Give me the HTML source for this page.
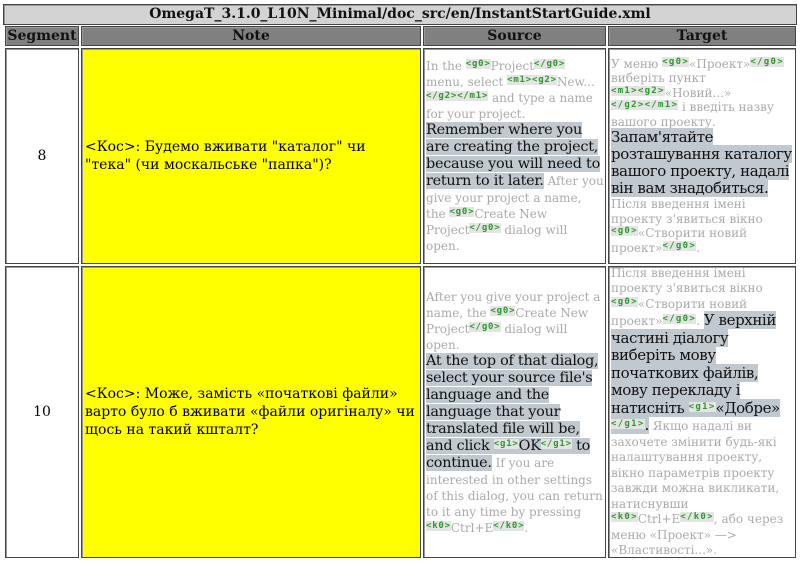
<!DOCTYPE html>
<html><head><meta charset="utf-8"><style>
body{margin:0;width:800px;height:562px;background:#fff;overflow:hidden;font-family:"DejaVu Serif","Liberation Serif",serif;}
.c{position:absolute;box-sizing:border-box;border:1px solid #444;box-shadow:inset 1px 1px 0 #999;}
.h{background:#808080;font-weight:bold;font-size:14px;text-align:center;line-height:18px;color:#111}
.v{display:flex;align-items:center}
.s{font-size:12px;line-height:15px;color:#aaa;padding:0 1px 0 2px}
.b{font-size:14.4px;line-height:17px;color:#111;background:#c0c8d0;letter-spacing:-0.25px}
.tg .b{font-size:15px;letter-spacing:-0.4px}
.t{font-family:"DejaVu Sans Mono","Liberation Mono",monospace;font-size:9px;color:#2a9a2a;background:#e4e4e4;vertical-align:4px;line-height:0;font-weight:bold;letter-spacing:0.8px}
.tg .t{letter-spacing:1.3px}
</style></head><body>
<div class="c" style="left:3px;top:4px;width:794px;height:21px;background:#d3d3d3;font-weight:bold;font-size:14px;text-align:center;line-height:19px;color:#111">OmegaT_3.1.0_L10N_Minimal/doc_src/en/InstantStartGuide.xml</div>
<div class="c h" style="left:5px;top:26px;width:74px;height:20px">Segment</div>
<div class="c h" style="left:81px;top:26px;width:340px;height:20px">Note</div>
<div class="c h" style="left:423px;top:26px;width:183px;height:20px">Source</div>
<div class="c h" style="left:608px;top:26px;width:188px;height:20px">Target</div>

<div class="c v" style="left:5px;top:48px;width:74px;height:216px;justify-content:center;font-size:14px">8</div>
<div class="c v" style="left:81px;top:48px;width:340px;height:216px;background:#ff0;font-size:14px;line-height:18px;padding:0 3px 0 3px"><div style="width:300px">&lt;Кос&gt;: Будемо вживати "каталог" чи "тека" (чи москальське "папка")?</div></div>
<div class="c v" style="left:423px;top:48px;width:183px;height:216px"><div class="s" style="line-height:16px">In the <span class="t">&lt;g0&gt;</span>Project<span class="t">&lt;/g0&gt;</span><br>menu, select <span class="t">&lt;m1&gt;&lt;g2&gt;</span>New...<br><span class="t">&lt;/g2&gt;&lt;/m1&gt;</span> and type a name for your project.<br><span class="b">Remember where you are creating the project, because you will need to return to it later.</span> After you<br>give your project a name, the <span class="t">&lt;g0&gt;</span>Create New Project<span class="t">&lt;/g0&gt;</span> dialog will open.</div></div>
<div class="c v tg" style="left:608px;top:48px;width:188px;height:216px"><div class="s" style="line-height:14.5px">У меню <span class="t">&lt;g0&gt;</span>«Проект»<span class="t">&lt;/g0&gt;</span> виберіть пункт<br><span class="t">&lt;m1&gt;&lt;g2&gt;</span>«Новий...»<br><span class="t">&lt;/g2&gt;&lt;/m1&gt;</span> і введіть назву вашого проекту.<br><span class="b">Запам'ятайте розташування каталогу вашого проекту, надалі він вам знадобиться.</span><br>Після введення імені проекту з'явиться вікно <span class="t">&lt;g0&gt;</span>«Створити новий проект»<span class="t">&lt;/g0&gt;</span>.</div></div>

<div class="c v" style="left:5px;top:266px;width:74px;height:292px;justify-content:center;font-size:14px">10</div>
<div class="c v" style="left:81px;top:266px;width:340px;height:292px;background:#ff0;font-size:14px;line-height:18px;padding:0 3px">&lt;Кос&gt;: Може, замість «початкові файли» варто було б вживати «файли оригіналу» чи щось на такий кшталт?</div>
<div class="c v" style="left:423px;top:266px;width:183px;height:292px"><div class="s" style="line-height:16px">After you give your project a name, the <span class="t">&lt;g0&gt;</span>Create New Project<span class="t">&lt;/g0&gt;</span> dialog will open.<br><span class="b">At the top of that dialog, select your source file's language and the language that your translated file will be, and click <span class="t">&lt;g1&gt;</span>OK<span class="t">&lt;/g1&gt;</span> to continue.</span> If you are interested in other settings of this dialog, you can return to it any time by pressing <span class="t">&lt;k0&gt;</span>Ctrl+E<span class="t">&lt;/k0&gt;</span>.</div></div>
<div class="c v tg" style="left:608px;top:266px;width:188px;height:292px"><div class="s" style="line-height:15.5px">Після введення імені проекту з'явиться вікно <span class="t">&lt;g0&gt;</span>«Створити новий проект»<span class="t">&lt;/g0&gt;</span>. <span class="b">У верхній частині діалогу виберіть мову початкових файлів, мову перекладу і натисніть <span class="t">&lt;g1&gt;</span>«Добре» <span class="t">&lt;/g1&gt;</span>.</span> Якщо надалі ви захочете змінити будь-які налаштування проекту, вікно параметрів проекту завжди можна викликати, натиснувши <span class="t">&lt;k0&gt;</span>Ctrl+E<span class="t">&lt;/k0&gt;</span>, або через меню «Проект» —&gt; «Властивості...».</div></div>
</body></html>
